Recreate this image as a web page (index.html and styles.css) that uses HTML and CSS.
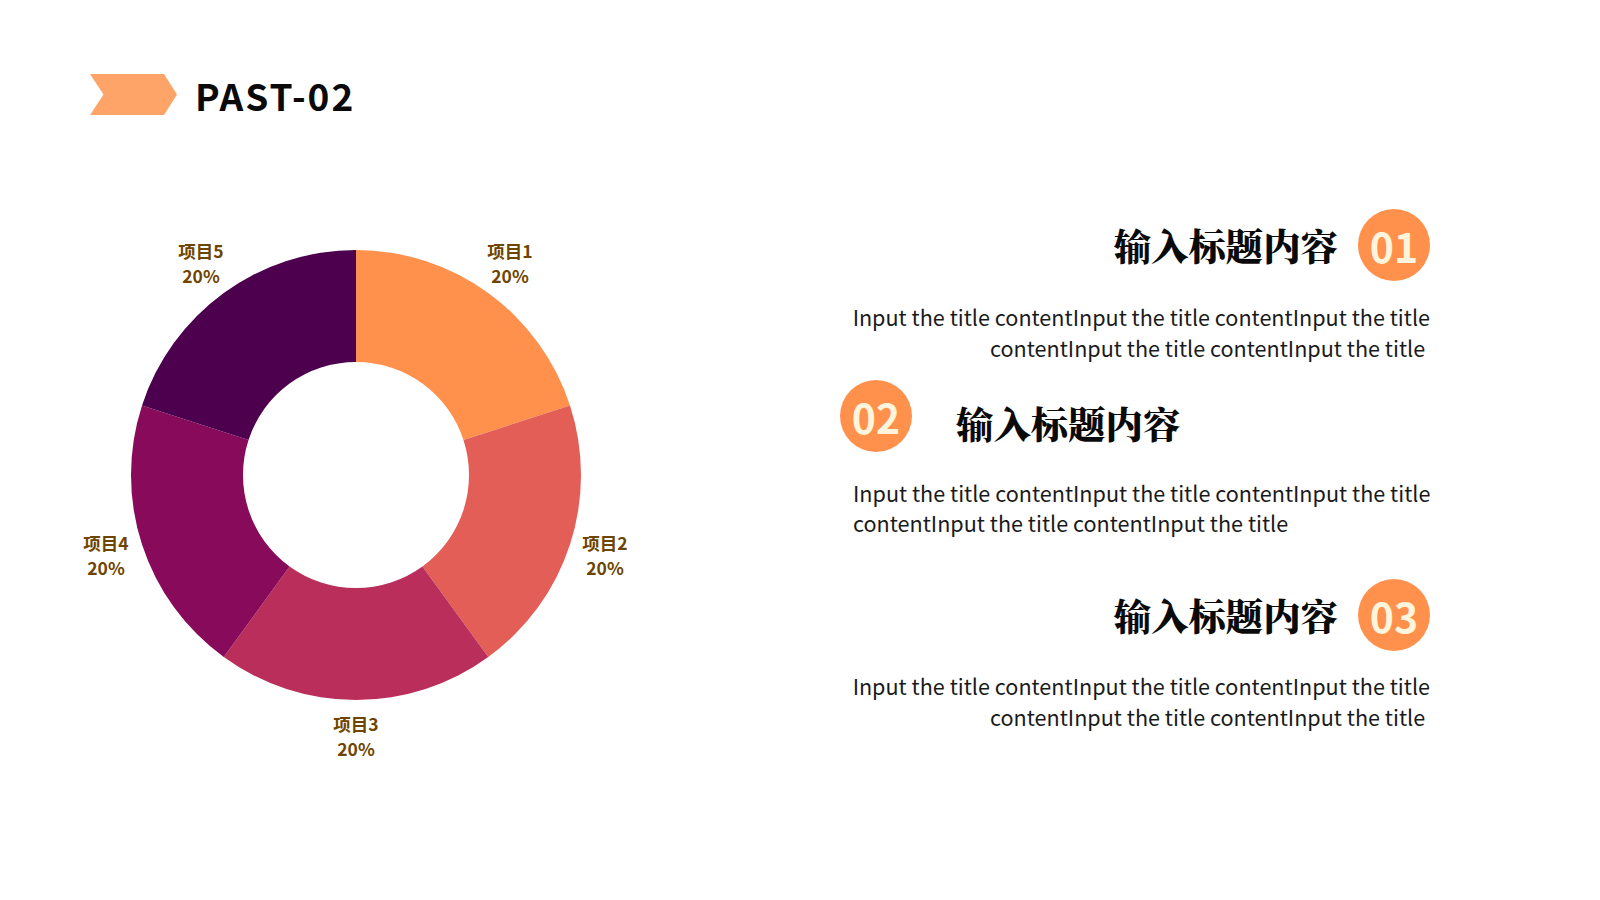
FILE: index.html
```html
<!DOCTYPE html>
<html lang="zh">
<head>
<meta charset="utf-8">
<title>PAST-02</title>
<link rel="stylesheet" href="styles.css">
</head>
<body>
<div class="page">
  <header class="header">
    <svg class="chevron" width="87" height="41" viewBox="0 0 87 41"><polygon points="0,0 74,0 87,20.5 74,41 0,41 13.5,20.5" fill="#FFA469"/></svg>
    <h1 class="title">PAST-02</h1>
  </header>
  <main class="main">
    <div class="chart">
      <svg class="donut" width="600" height="555" viewBox="0 0 600 555">
        <path fill="#FF914D" d="M298,32 A225,225 0 0 1 511.99,187.47 L405.47,222.08 A113,113 0 0 0 298,144 Z"/>
        <path fill="#E45E58" d="M511.99,187.47 A225,225 0 0 1 430.25,439.03 L364.42,348.42 A113,113 0 0 0 405.47,222.08 Z"/>
        <path fill="#BA2E5B" d="M430.25,439.03 A225,225 0 0 1 165.75,439.03 L231.58,348.42 A113,113 0 0 0 364.42,348.42 Z"/>
        <path fill="#880A5A" d="M165.75,439.03 A225,225 0 0 1 84.01,187.47 L190.53,222.08 A113,113 0 0 0 231.58,348.42 Z"/>
        <path fill="#4C004E" d="M84.01,187.47 A225,225 0 0 1 298,32 L298,144 A113,113 0 0 0 190.53,222.08 Z"/>
      </svg>
      <div class="label label-1">项目1<br>20%</div>
      <div class="label label-2">项目2<br>20%</div>
      <div class="label label-3">项目3<br>20%</div>
      <div class="label label-4">项目4<br>20%</div>
      <div class="label label-5">项目5<br>20%</div>
    </div>
    <section class="items">
      <div class="item item-right item-1">
        <div class="item-head">
          <h2 class="item-title">输入标题内容</h2>
          <div class="num">01</div>
        </div>
        <p class="item-text">Input the title contentInput the title contentInput the title contentInput the title contentInput the title&nbsp;</p>
      </div>
      <div class="item item-left item-2">
        <div class="item-head">
          <div class="num">02</div>
          <h2 class="item-title">输入标题内容</h2>
        </div>
        <p class="item-text">Input the title contentInput the title contentInput the title contentInput the title contentInput the title</p>
      </div>
      <div class="item item-right item-3">
        <div class="item-head">
          <h2 class="item-title">输入标题内容</h2>
          <div class="num">03</div>
        </div>
        <p class="item-text">Input the title contentInput the title contentInput the title contentInput the title contentInput the title&nbsp;</p>
      </div>
    </section>
  </main>
</div>
</body>
</html>
```
FILE: styles.css
```css
* { box-sizing: border-box; }
html, body { margin: 0; padding: 0; background: #ffffff; }
body { font-family: "Noto Sans CJK SC", "Noto Sans", sans-serif; color: #111; }
.page { width: 1600px; height: 900px; overflow: hidden; background: #fff; }

.header {
  display: flex;
  align-items: center;
  gap: 18px;
  padding: 74px 0 0 90px;
  height: 115px;
}
.chevron { display: block; flex: none; }
.title {
  margin: 2px 0 0 0;
  font-family: "Noto Sans CJK SC", "Noto Sans", sans-serif;
  font-weight: 700;
  font-size: 37px;
  letter-spacing: 2px;
  line-height: 41px;
  color: #0a0a0a;
}

.main {
  display: flex;
  align-items: flex-start;
}
.chart {
  position: relative;
  width: 600px;
  height: 555px;
  margin: 103px 0 0 58px;
  flex: none;
}
.donut { display: block; }
.label {
  position: absolute;
  width: 84px;
  margin-left: -42px;
  text-align: center;
  font-family: "Noto Sans CJK SC", sans-serif;
  font-weight: 700;
  font-size: 17.5px;
  line-height: 25px;
  color: #6E4500;
}
.label-1 { left: 452px; top: 20px; }
.label-2 { left: 547px; top: 312px; }
.label-3 { left: 298px; top: 493px; }
.label-4 { left: 48px; top: 312px; }
.label-5 { left: 143px; top: 20px; }

.items {
  width: 600px;
  margin: 94px 0 0 182px;
  display: flex;
  flex-direction: column;
}
.item-head {
  display: flex;
  align-items: center;
}
.item-right .item-head { justify-content: flex-end; gap: 20px; padding-right: 10px; }
.item-left .item-head { justify-content: flex-start; gap: 44px; }
.item-title {
  margin: 0;
  font-family: "Noto Serif CJK SC", "Noto Sans CJK SC", serif;
  font-weight: 900;
  font-size: 37.4px;
  line-height: 45px;
  color: #0a0a0a;
}
.item-2 .item-title { margin-top: 16px; }
.num {
  width: 72px;
  height: 72px;
  border-radius: 50%;
  background: #FF914D;
  color: #FFF4DC;
  font-family: "Noto Sans CJK SC", sans-serif;
  font-weight: 700;
  font-size: 41px;
  line-height: 72px;
  text-align: center;
  flex: none;
}
.item-text {
  margin: 21px 0 0 0;
  font-family: "Noto Sans CJK SC", sans-serif;
  font-weight: 400;
  font-size: 21.6px;
  line-height: 30.8px;
  color: #1a1a1a;
}
.item-right .item-text { text-align: right; padding-right: 10px; }
.item-left .item-text { text-align: left; margin-left: 13px; width: 587px; }
.item-2 { margin-top: 16px; }
.item-2 .item-text { margin-top: 26px; }
.item-3 { margin-top: 40px; }
.item-3 .item-text { margin-top: 20px; }
```
